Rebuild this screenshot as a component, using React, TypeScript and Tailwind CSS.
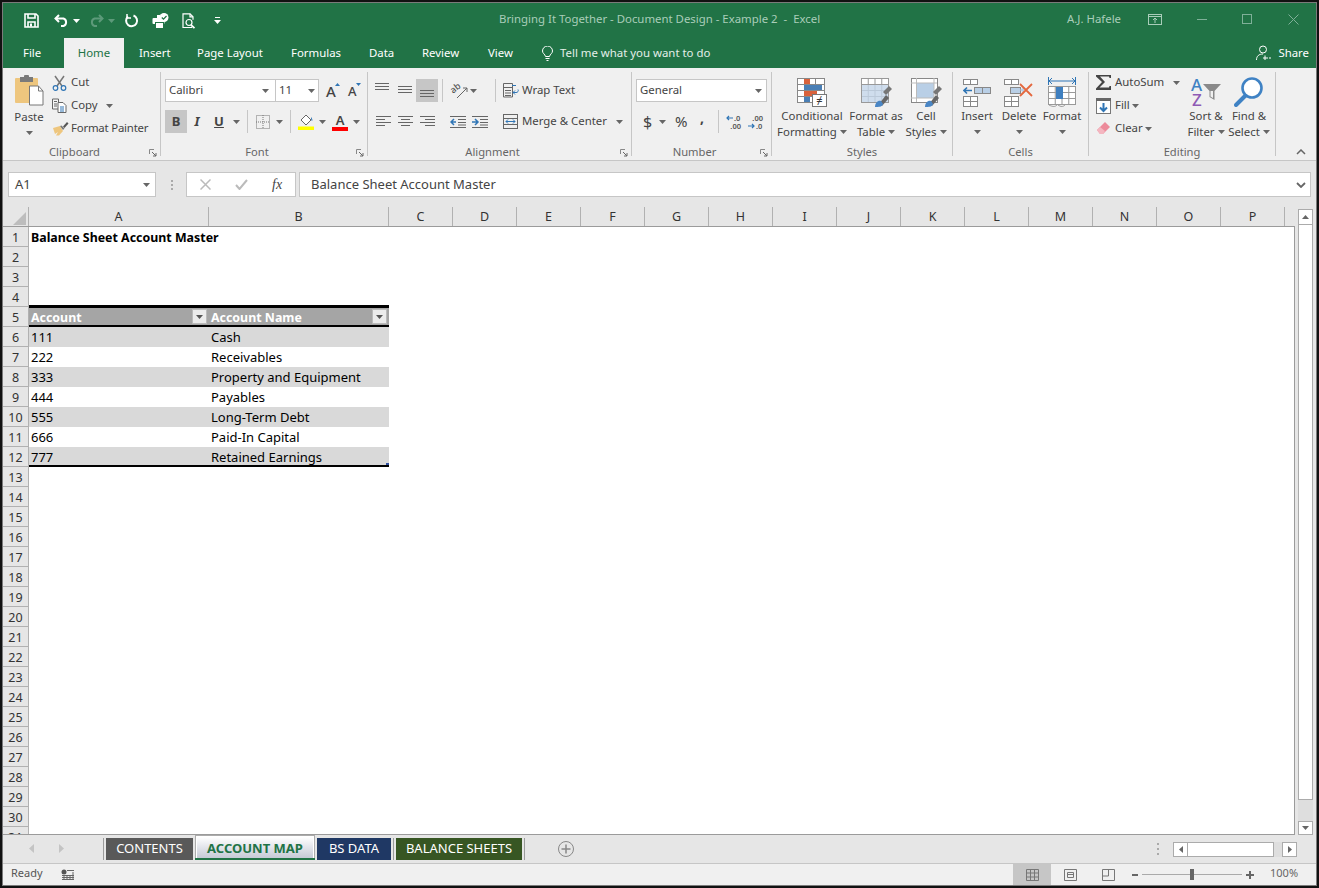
import React from 'react'

const uiFont = { fontFamily: '"Noto Sans", "Open Sans", sans-serif' }

const Caret = ({ className = '', color = '#666' }: { className?: string; color?: string }) => (
  <svg width="7" height="4" viewBox="0 0 7 4" className={className}>
    <path d="M0 0h7L3.500 4z" fill={color} />
  </svg>
)

const Launcher = () => (
  <svg width="8" height="8" viewBox="0 0 8 8" className="absolute right-[3px] top-[5px]">
    <path d="M0.500 5V0.500H5" fill="none" stroke="#888" />
    <path d="M3 3l4 4M7 4v3H4" fill="none" stroke="#666" />
  </svg>
)

const Sep = ({ h = 84 }: { h?: number }) => (
  <div className={h === 84 ? 'w-px h-[84px] mt-[4px] bg-[#c6c6c6] shrink-0' : 'w-px h-[23px] bg-[#c6c6c6] shrink-0'} />
)

const Lbl = ({ children }: { children: React.ReactNode }) => <span className="pb-[2px]">{children}</span>

function Group({ width, label, launcher = true, children }: { width: string; label: string; launcher?: boolean; children: React.ReactNode }) {
  return (
    <div className={`flex flex-col h-[92px] shrink-0 ${width}`}>
      <div className="h-[76px] flex">{children}</div>
      <div className={`relative h-[16px] text-center text-[11.2px] leading-[16px] text-[#666] ${launcher ? 'pr-[14px]' : ''}`}>
        {label}
        {launcher && <Launcher />}
      </div>
    </div>
  )
}

function BigButton({ width, lines, caretInline, icon }: { width: string; lines: string[]; caretInline?: boolean; icon: React.ReactNode }) {
  return (
    <div className={`flex flex-col items-center shrink-0 pt-[8px] text-[11.4px] leading-[16px] text-[#444] ${width}`}>
      <div className="h-[32px] w-[32px] flex items-center justify-center">{icon}</div>
      <div className="whitespace-nowrap">{lines[0]}</div>
      {lines[1] ? (
        <div className="whitespace-nowrap flex items-center gap-[3px]">
          {lines[1]}
          {caretInline && <Caret />}
        </div>
      ) : (
        <div className="h-[16px] flex items-center"><Caret /></div>
      )}
    </div>
  )
}

/* quick access icons */
const SaveIcon = () => (
  <svg width="15" height="15" viewBox="0 0 15 15" fill="none" stroke="#fff" strokeWidth="1.600">
    <path d="M1 1h11l2 2v11H1z" />
    <path d="M4 1v4h7V1M4 14V9h7v5" />
    <rect x="6" y="10.500" width="2" height="3" fill="#fff" stroke="none" />
  </svg>
)
const UndoIcon = ({ faded }: { faded?: boolean }) => (
  <svg width="15" height="13" viewBox="0 0 15 13" fill="none" stroke={faded ? '#5d9a7a' : '#fff'} strokeWidth="2" className={faded ? '-scale-x-100' : ''}>
    <path d="M5 1L1.500 4.500 5 8" />
    <path d="M2 4.500h7.500a4 4 0 0 1 0 7.500H7" />
  </svg>
)
const RepeatIcon = () => (
  <svg width="15" height="15" viewBox="0 0 15 15" fill="none" stroke="#fff" strokeWidth="2">
    <path d="M9.500 2.500a5.500 5.500 0 1 1-5.500 1" />
    <path d="M3 1v4h4" strokeWidth="1.500" />
  </svg>
)
const PrintCheckIcon = () => (
  <svg width="17" height="16" viewBox="0 0 17 16">
    <rect x="0.500" y="5" width="12" height="6" rx="1" fill="#fff" />
    <rect x="3.500" y="9.500" width="8" height="6" fill="#fff" stroke="#217346" />
    <path d="M5 2h3v3H5z" fill="#fff" />
    <circle cx="12" cy="4.500" r="4.500" fill="#fff" />
    <path d="M9.800 4.500l1.700 1.700L14.500 3" fill="none" stroke="#217346" strokeWidth="1.200" />
  </svg>
)
const PreviewIcon = () => (
  <svg width="15" height="16" viewBox="0 0 15 16" fill="none" stroke="#fff" strokeWidth="1.200">
    <path d="M10 14.500H1V.8h7l3 3v3" />
    <path d="M8 .8v3h3" />
    <circle cx="7" cy="9.500" r="3" />
    <path d="M9 12l3.500 3.200" strokeWidth="1.800" />
  </svg>
)

/* ribbon icons */
const PasteIcon = () => (
  <svg width="30" height="32" viewBox="0 0 30 32">
    <rect x="1" y="3" width="23" height="25" rx="1" fill="#eec67e" />
    <rect x="6" y="2" width="13" height="5" fill="#7a7a7a" />
    <rect x="10" y="0" width="5" height="4" rx="1" fill="#7a7a7a" />
    <path d="M15.500 11h9l4.500 5v14H15.500z" fill="#fff" stroke="#777" />
    <path d="M24.500 11v5H29" fill="none" stroke="#777" />
  </svg>
)
const ScissorsIcon = () => (
  <svg width="15" height="16" viewBox="0 0 15 16" fill="none">
    <path d="M3 1l7 10M12 1L5 11" stroke="#777" strokeWidth="1.500" />
    <circle cx="3.500" cy="13" r="2.300" stroke="#2f75b5" strokeWidth="1.200" />
    <circle cx="11.500" cy="13" r="2.300" stroke="#2f75b5" strokeWidth="1.200" />
  </svg>
)
const CopyIcon = () => (
  <svg width="15" height="15" viewBox="0 0 15 15" fill="none" stroke="#666">
    <path d="M.5 1h6v10h-6z" fill="#f5f5f5" />
    <path d="M6 4.500h5l3 3v7H6z" fill="#fff" />
    <path d="M2 3.500h3M2 6h3M2 8h3" />
    <path d="M8 9h4M8 11h4M8 13h4" stroke="#2f75b5" />
  </svg>
)
const BrushIcon = () => (
  <svg width="17" height="15" viewBox="0 0 17 15">
    <path d="M1 7l7-2 3 5-4 4.500H4L6 11l-3 2z" fill="#eec67e" />
    <path d="M8 5l3 4 1.500-1.500-3-3z" fill="#777" />
    <path d="M11 5.500L15 1l1.500 1.500L12.500 7z" fill="#555" />
  </svg>
)
const BordersIcon = () => (
  <svg width="14" height="14" viewBox="0 0 14 14" fill="none" stroke="#777" strokeDasharray="1 1">
    <rect x="0.500" y="0.500" width="13" height="13" />
    <path d="M7 0v14M0 7h14" />
  </svg>
)
const FillIcon = () => (
  <svg width="16" height="16" viewBox="0 0 16 16">
    <path d="M3 6l5-5 5 5-5 5z" fill="#fff" stroke="#666" />
    <path d="M13 3c1 1.500 2 3 1 4-1-1-1-2.500-1-4z" fill="#2f75b5" />
    <rect x="0" y="12.500" width="16" height="3.500" fill="#ffff00" />
  </svg>
)
const AlignLines = ({ d }: { d: string }) => (
  <svg width="15" height="13" viewBox="0 0 15 13" stroke="#666"><path d={d} /></svg>
)
const VAlign = () => (
  <svg width="14" height="9" viewBox="0 0 14 9" stroke="#666">
    <path d="M0 .5h14M0 3.500h14M0 6.500h14" />
  </svg>
)
const OrientIcon = () => (
  <div className="relative w-[18px] h-[16px]">
    <span className="absolute left-[0px] top-[-1px] text-[9px] leading-[12px] text-[#555] font-medium -rotate-[38deg]">ab</span>
    <svg width="18" height="16" viewBox="0 0 18 16" fill="none" className="absolute left-0 top-0">
      <path d="M7 15L17 5M17 5h-4M17 5v4" stroke="#666" />
    </svg>
  </div>
)
const IndentIcon = ({ flip }: { flip?: boolean }) => (
  <svg width="16" height="12" viewBox="0 0 16 12">
    {flip ? (
      <path d="M0 6h5M3 3l3 3-3 3" stroke="#2f75b5" strokeWidth="1.500" fill="none" />
    ) : (
      <path d="M6 6H1M4 3L1 6l3 3" stroke="#2f75b5" strokeWidth="1.500" fill="none" />
    )}
    <path d="M8 3.500h8M8 6.500h8M8 9h8M0 .5h16M0 11.500h16" stroke="#666" />
  </svg>
)
const WrapIcon = () => (
  <svg width="16" height="15" viewBox="0 0 16 15" fill="none">
    <path d="M.5 .5h9v13.500h-9zM.5 4.500h9" stroke="#666" />
    <path d="M2 7.500h6M2 10h6M2 12.500h6" stroke="#666" />
    <path d="M9 2.500h4M10 9.500h3a2 2 0 0 0 2-3M12 7.500l-2 2 2 2" stroke="#2f75b5" />
  </svg>
)
const MergeIcon = () => (
  <svg width="15" height="15" viewBox="0 0 15 15" fill="none" stroke="#666">
    <rect x="0.500" y="0.500" width="14" height="14" />
    <path d="M0 4.500h15M0 10.500h15" />
    <path d="M3 7.500h9M5 5.500l-2 2 2 2M10 5.500l2 2-2 2" stroke="#2f75b5" />
  </svg>
)
const IncDecIcon = ({ dec }: { dec?: boolean }) => (
  <div className="relative w-[15px] h-[16px] text-[7.5px] leading-[8px] text-[#555] font-semibold">
    <div className={dec ? 'text-right' : 'pl-[8px]'}>{dec ? '.00' : '.0'}</div>
    <div className={dec ? 'pl-[8px]' : 'text-right'}>{dec ? '.0' : '.00'}</div>
    <svg width="7" height="6" viewBox="0 0 7 6" className={dec ? 'absolute left-0 bottom-[1px]' : 'absolute left-0 top-[1px]'} fill="none" stroke="#2f75b5" strokeWidth="1.200">
      {dec ? <path d="M0 3h6M4 1l2 2-2 2" /> : <path d="M7 3H1M3 1L1 3l2 2" />}
    </svg>
  </div>
)

const GridCells = ({ x, y, w, h, cols, rows, stroke = '#888' }: { x: number; y: number; w: number; h: number; cols: number; rows: number; stroke?: string }) => (
  <g stroke={stroke} fill="none">
    <rect x={x + 0.5} y={y + 0.5} width={w} height={h} fill="#fff" />
    {Array.from({ length: cols - 1 }).map((_, i) => (
      <path key={i} d={`M${x + 0.5 + ((i + 1) * w) / cols} ${y}v${h}`} />
    ))}
    {Array.from({ length: rows - 1 }).map((_, i) => (
      <path key={i} d={`M${x} ${y + 0.5 + ((i + 1) * h) / rows}h${w}`} />
    ))}
  </g>
)

const CondIcon = () => (
  <svg width="31" height="31" viewBox="0 0 31 31">
    <GridCells x={0} y={1} w={27} h={24} cols={3} rows={4} />
    <rect x="7" y="2" width="6" height="5" fill="#d9623b" />
    <rect x="7" y="8" width="18" height="5" fill="#4a7fb5" />
    <rect x="7" y="14" width="13" height="5" fill="#d9623b" />
    <rect x="7" y="20" width="6" height="5" fill="#4a7fb5" />
    <rect x="15.500" y="17.500" width="14" height="12" fill="#fff" stroke="#777" />
    <text x="22.500" y="27" fontSize="11" textAnchor="middle" fill="#333" fontFamily="Noto Sans">≠</text>
  </svg>
)
const BrushOver = () => (
  <g>
    <path d="M18 27l7-9 3 3-7 8z" fill="#666" />
    <path d="M22 15l6-6 3 3-6 6z" fill="#777" />
    <path d="M14 30c0-4 3-7 6-6l2 3c-1 3-4 3-8 3z" fill="#4a86c5" />
  </g>
)
const FormatTableIcon = () => (
  <svg width="31" height="31" viewBox="0 0 31 31">
    <GridCells x={0} y={1} w={27} h={24} cols={4} rows={4} stroke="#999" />
    <rect x="1" y="8" width="26" height="17" fill="#c3d4e8" opacity="0.800" />
    <BrushOver />
  </svg>
)
const CellStylesIcon = () => (
  <svg width="31" height="31" viewBox="0 0 31 31">
    <rect x="0.500" y="1.500" width="26" height="24" fill="#fff" stroke="#888" />
    <rect x="5" y="6" width="18" height="15" fill="#b9cfe6" />
    <path d="M5.500 1v24M0 6h26M23 1v24M0 21h26" stroke="#bbb" />
    <BrushOver />
  </svg>
)
const InsertIcon = () => (
  <svg width="28" height="30" viewBox="0 0 28 30">
    <GridCells x={0} y={2} w={14} h={5} cols={2} rows={1} />
    <GridCells x={0} y={19} w={14} h={10} cols={2} rows={2} />
    <rect x="11.500" y="10.500" width="16" height="6" fill="#b9cfe6" stroke="#888" />
    <path d="M19.500 10v6" stroke="#888" />
    <path d="M9 13.500H1M4 10.500l-3 3 3 3" fill="none" stroke="#2f75b5" strokeWidth="1.600" />
  </svg>
)
const DeleteIcon = () => (
  <svg width="30" height="30" viewBox="0 0 30 30">
    <GridCells x={0} y={2} w={14} h={5} cols={2} rows={1} />
    <GridCells x={0} y={19} w={14} h={10} cols={2} rows={2} />
    <rect x="6.500" y="10.500" width="10" height="6" fill="#b9cfe6" stroke="#888" />
    <path d="M16 13l4-3v6z" fill="#b9cfe6" />
    <path d="M16 7l12 12M28 7L16 19" stroke="#e4683e" strokeWidth="1.800" />
  </svg>
)
const FormatIcon = () => (
  <svg width="29" height="32" viewBox="0 0 29 32">
    <path d="M1 5h26M4 2L1 5l3 3M24 2l3 3-3 3M.5 1v8M27.500 1v8" fill="none" stroke="#2f75b5" />
    <GridCells x={0} y={10} w={27} h={18} cols={4} rows={3} stroke="#999" />
    <rect x="8" y="11" width="7" height="12" fill="#3f7fbf" />
    <path d="M1 29c4 2 6 2 8 0M10 29c3 2 5 2 7 0" fill="none" stroke="#999" />
  </svg>
)
const SortIcon = () => (
  <div className="relative w-[30px] h-[30px]">
    <div className="absolute left-0 top-0 h-[15px] text-[17px] leading-[15px] font-medium text-[#3f82c4]">A</div>
    <div className="absolute left-[1px] top-[15px] h-[15px] text-[17px] leading-[15px] font-medium text-[#8e5bb5]">Z</div>
    <svg width="18" height="16" viewBox="0 0 18 16" className="absolute right-0 top-[7px]">
      <path d="M0 0h18l-6.500 7v9l-5-3V7z" fill="#8a8a8a" />
      <path d="M7.500 7v5.500l2.500 1.500V7z" fill="#f0f0f0" />
    </svg>
  </div>
)
const FindIcon = () => (
  <svg width="30" height="30" viewBox="0 0 30 30" fill="none">
    <circle cx="18" cy="11" r="9.500" stroke="#3f82c4" strokeWidth="2.600" fill="#fff" />
    <path d="M11 19L2 28" stroke="#3f82c4" strokeWidth="4" strokeLinecap="round" />
  </svg>
)
const SigmaIcon = () => (
  <svg width="16" height="15" viewBox="0 0 16 15"><path d="M0 0h15v3h-1.500l-.5-1.500H4L9 7 3.500 12.500H13l.5-1.500H15v4H0v-1.500L6 7 0 1.500z" fill="#444" /></svg>
)
const FillDownIcon = () => (
  <svg width="15" height="16" viewBox="0 0 15 16">
    <rect x="0.500" y="0.500" width="14" height="15" fill="#fff" stroke="#777" />
    <rect x="0" y="0" width="15" height="3" fill="#666" />
    <path d="M7.500 5v8M4 9.500l3.500 3.500L11 9.500" fill="none" stroke="#2f75b5" strokeWidth="2" />
  </svg>
)
const EraserIcon = () => (
  <svg width="14" height="13" viewBox="0 0 14 13">
    <path d="M9 0l5 5-7 7-3 0-3-4z" fill="#ec8a9a" />
    <path d="M1 8l3-3 5 4-2 3H4z" fill="#f4b6c0" />
  </svg>
)

const columns = [
  { n: 'A', w: 'w-[180px]' }, { n: 'B', w: 'w-[180px]' }, { n: 'C', w: 'w-[64px]' }, { n: 'D', w: 'w-[64px]' },
  { n: 'E', w: 'w-[64px]' }, { n: 'F', w: 'w-[64px]' }, { n: 'G', w: 'w-[64px]' }, { n: 'H', w: 'w-[64px]' },
  { n: 'I', w: 'w-[64px]' }, { n: 'J', w: 'w-[64px]' }, { n: 'K', w: 'w-[64px]' }, { n: 'L', w: 'w-[64px]' },
  { n: 'M', w: 'w-[64px]' }, { n: 'N', w: 'w-[64px]' }, { n: 'O', w: 'w-[64px]' }, { n: 'P', w: 'w-[64px]' }
]

const accounts: Record<number, [string, string]> = {
  6: ['111', 'Cash'],
  7: ['222', 'Receivables'],
  8: ['333', 'Property and Equipment'],
  9: ['444', 'Payables'],
  10: ['555', 'Long-Term Debt'],
  11: ['666', 'Paid-In Capital'],
  12: ['777', 'Retained Earnings']
}

const FilterButton = () => (
  <div className="w-[15px] h-[15px] mr-[2px] bg-[#ececec] border border-[#bbb] flex items-center justify-center shrink-0">
    <Caret color="#555" />
  </div>
)

function Row({ n }: { n: number }) {
  let body: React.ReactNode = null
  if (n === 1) {
    body = <div className="pl-[2px] pt-[1px] font-bold text-[12.4px] text-black whitespace-nowrap">Balance Sheet Account Master</div>
  } else if (n === 4) {
    body = <div className="w-[360px] h-[20px] border-b-[2px] border-black" />
  } else if (n === 5) {
    body = (
      <div className="w-[360px] h-[20px] flex border-t border-b-[2px] border-black bg-[#a5a5a5] font-bold text-[12.4px] text-white">
        {['Account', 'Account Name'].map((t) => (
          <div key={t} className="w-[180px] h-[17px] flex items-center justify-between pl-[2px]">
            <span className="pt-[2px]">{t}</span>
            <FilterButton />
          </div>
        ))}
      </div>
    )
  } else if (accounts[n]) {
    const stripe = n % 2 === 0
    const last = n === 12
    body = (
      <div className={`relative w-[360px] h-[20px] flex items-start text-black ${stripe ? 'bg-[#d9d9d9]' : 'bg-white'} ${last ? 'border-b-[2px] border-black' : ''}`}>
        <div className="w-[180px] pl-[2px]">{accounts[n][0]}</div>
        <div className="w-[180px] pl-[2px]">{accounts[n][1]}</div>
        {last && <div className="absolute right-0 bottom-0 w-[3px] h-[2px] bg-[#2f4f9f]" />}
      </div>
    )
  }
  return (
    <div className="flex h-[20px] shrink-0 text-[13px] leading-[20px]">
      <div className="w-[26px] h-[20px] pt-[1px] bg-[#e6e6e6] border-b border-r border-[#b1b1b1] text-center text-[#333] text-[12.5px] leading-[19px] shrink-0">{n}</div>
      {body}
    </div>
  )
}

export default function App() {
  const rows = Array.from({ length: 31 }, (_, i) => i + 1)
  return (
    <div className="w-[1319px] h-[888px] bg-[#111] pt-[2px] pl-[2px] overflow-hidden" style={uiFont}>
      <div className="w-[1315px] h-[884px] border border-[#7a7a7a] flex flex-col overflow-hidden">
        {/* Title bar */}
        <div className="h-[35px] bg-[#217346] flex items-center shrink-0 text-[11.4px]">
          <div className="ml-[21px] flex items-center w-[16px]"><SaveIcon /></div>
          <div className="ml-[14px]"><UndoIcon /></div>
          <Caret className="ml-[4px]" color="#fff" />
          <div className="ml-[9px]"><UndoIcon faded /></div>
          <Caret className="ml-[4px]" color="#5d9a7a" />
          <div className="ml-[9px]"><RepeatIcon /></div>
          <div className="ml-[13px]"><PrintCheckIcon /></div>
          <div className="ml-[13px]"><PreviewIcon /></div>
          <div className="ml-[17px] flex flex-col items-center gap-[2px] w-[7px]">
            <div className="w-[5px] h-px bg-white" />
            <Caret color="#fff" />
          </div>
          <div className="ml-[278px] w-[330px] pb-[3px] whitespace-pre text-[#a9cdb9]">Bringing It Together - Document Design - Example 2  -  Excel</div>
          <div className="ml-[238px] w-[60px] pb-[3px] whitespace-nowrap text-[#a9cdb9]">A.J. Hafele</div>
          <div className="flex items-center pb-[3px]">
            <svg width="14" height="11" viewBox="0 0 14 11" className="ml-[21px]" fill="none" stroke="#a9cdb9">
              <rect x="0.500" y="0.500" width="13" height="10" />
              <path d="M0 2.500h14M7 9V4M5 6l2-2 2 2" />
            </svg>
            <div className="ml-[35px] w-[10px] h-px bg-[#7fb098]" />
            <div className="ml-[35px] w-[10px] h-[10px] border border-[#7fb098]" />
            <svg width="11" height="11" viewBox="0 0 11 11" className="ml-[36px]" stroke="#7fb098"><path d="M.5 .5l10 10M10.500 .5l-10 10" /></svg>
          </div>
        </div>

        {/* Menu tabs */}
        <div className="h-[30px] bg-[#217346] flex items-stretch shrink-0 text-[11.4px] text-white leading-[30px] relative">
          <div className="ml-[20px] w-[18px] text-center">File</div>
          <div className="ml-[23px] w-[60px] bg-[#f0f0f0] text-[#217346] text-center">Home</div>
          <div className="ml-[15px] w-[29px] text-center">Insert</div>
          <div className="ml-[29px] w-[65px] text-center whitespace-nowrap">Page Layout</div>
          <div className="ml-[29px] w-[49px] text-center">Formulas</div>
          <div className="ml-[29px] w-[24px] text-center">Data</div>
          <div className="ml-[29px] w-[37px] text-center">Review</div>
          <div className="ml-[29px] w-[25px] text-center">View</div>
          <div className="ml-[29px] flex items-center shrink-0">
            <svg width="11" height="15" viewBox="0 0 11 15" fill="none" stroke="#fff">
              <path d="M3.500 10.500C3 8 .5 7.500 .5 5a5 5 0 0 1 10 0c0 2.500-2.500 3-3 5.500zM3.500 12.500h4M4.500 14.500h2" />
            </svg>
            <span className="ml-[7px] w-[151px] whitespace-nowrap text-[#e4efe9]">Tell me what you want to do</span>
          </div>
          <div className="ml-auto mr-[7px] flex items-center">
            <svg width="16" height="16" viewBox="0 0 16 16" fill="none" stroke="#fff" className="mr-[1px]">
              <circle cx="7" cy="4.500" r="3.500" />
              <path d="M.5 15c0-4 2.500-6 6.500-6M9 10.500V15M12 13H7M13 13h2" />
            </svg>
            <span className="ml-[5px]">Share</span>
          </div>
        </div>

        {/* Ribbon */}
        <div className="h-[92px] bg-[#f0f0f0] flex shrink-0 relative">
          <Group width="w-[157px]" label="Clipboard">
            <div className="w-[48px] pl-[4px] pt-[7px] flex flex-col items-center text-[11.4px] leading-[16px] text-[#444]">
              <PasteIcon />
              <div className="mt-[2px]">Paste</div>
              <div className="h-[16px] flex items-center"><Caret /></div>
            </div>
            <div className="pt-[3px] ml-[1px] flex flex-col text-[11.4px] text-[#444]">
              <div className="h-[23px] flex items-center"><div className="w-[19px]"><ScissorsIcon /></div><Lbl>Cut</Lbl></div>
              <div className="h-[23px] flex items-center"><div className="w-[19px]"><CopyIcon /></div><Lbl>Copy</Lbl><Caret className="ml-[8px]" /></div>
              <div className="h-[23px] flex items-center whitespace-nowrap tracking-[-0.2px]"><div className="w-[19px]"><BrushIcon /></div><Lbl>Format Painter</Lbl></div>
            </div>
          </Group>
          <Sep />

          <Group width="w-[206px]" label="Font">
            <div className="pl-[4px] pt-[11px] flex flex-col text-[11.4px] text-[#444]">
              <div className="flex items-center h-[23px]">
                <div className="w-[111px] h-[23px] bg-white border border-[#c6c6c6] flex items-center justify-between px-[3px] pr-[6px]"><Lbl>Calibri</Lbl><Caret /></div>
                <div className="w-[43px] h-[23px] bg-white border border-l-0 border-[#c6c6c6] flex items-center justify-between pl-[3px] pr-[3px] mr-[7px]"><Lbl>11</Lbl><Caret /></div>
                <div className="relative w-[22px] text-[15px] leading-[20px] font-medium">A<svg width="5" height="3" viewBox="0 0 5 3" className="absolute left-[9px] top-[2px]"><path d="M0 3h5L2.500 0z" fill="#2f75b5" /></svg></div>
                <div className="relative w-[20px] text-[13px] leading-[20px] font-medium">A<svg width="5" height="3" viewBox="0 0 5 3" className="absolute left-[8px] top-[2px]"><path d="M0 0h5L2.500 3z" fill="#2f75b5" /></svg></div>
              </div>
              <div className="flex items-center h-[23px] mt-[8px]">
                <div className="w-[22px] h-[23px] bg-[#c6c6c6] flex items-center justify-center font-bold text-[13px]">B</div>
                <div className="w-[20px] text-center italic font-bold text-[13px]">I</div>
                <div className="w-[24px] text-center underline font-bold text-[13px]">U</div>
                <Caret className="ml-[2px]" />
                <div className="ml-[7px]"><Sep h={23} /></div>
                <div className="ml-[8px]"><BordersIcon /></div>
                <Caret className="ml-[6px]" />
                <div className="ml-[7px]"><Sep h={23} /></div>
                <div className="ml-[7px]"><FillIcon /></div>
                <Caret className="ml-[5px]" />
                <div className="ml-[6px] w-[16px] flex flex-col items-center text-[13px] leading-[14px] font-semibold">A<div className="w-[16px] h-[4px] bg-[#ff0000]" /></div>
                <Caret className="ml-[5px]" />
              </div>
            </div>
          </Group>
          <Sep />

          <Group width="w-[263px]" label="Alignment">
            <div className="pl-[7px] pt-[11px] w-[74px] flex flex-col">
              <div className="flex items-center h-[23px]">
                <div className="w-[23px] h-[23px] pb-[6px] flex items-center"><VAlign /></div>
                <div className="w-[18px] h-[23px] flex items-center"><VAlign /></div>
                <div className="w-[22px] h-[23px] pl-[4px] pt-[8px] flex items-center bg-[#c6c6c6]"><VAlign /></div>
              </div>
              <div className="flex items-center h-[23px] mt-[8px] gap-[7px] pl-[1px]">
                <AlignLines d="M0 1.500h15M0 4.500h9M0 7.500h15M0 10.500h9" />
                <AlignLines d="M0 1.500h15M3 4.500h9M0 7.500h15M3 10.500h9" />
                <AlignLines d="M0 1.500h15M5 4.500h10M0 7.500h15M5 10.500h10" />
              </div>
            </div>
            <div className="pt-[11px]"><Sep h={23} /></div>
            <div className="pt-[11px] pl-[7px] w-[52px] flex flex-col">
              <div className="h-[23px] flex items-center"><OrientIcon /><Caret className="ml-[2px]" /></div>
              <div className="h-[23px] mt-[8px] flex items-center gap-[6px]"><IndentIcon /><IndentIcon flip /></div>
            </div>
            <div className="pt-[11px]"><Sep h={23} /></div>
            <div className="pt-[11px] pl-[7px] flex flex-col text-[11.4px] text-[#444]">
              <div className="h-[23px] flex items-center whitespace-nowrap"><div className="w-[19px]"><WrapIcon /></div><Lbl>Wrap Text</Lbl></div>
              <div className="h-[23px] mt-[8px] flex items-center whitespace-nowrap"><div className="w-[19px]"><MergeIcon /></div><Lbl>Merge &amp; Center</Lbl><Caret className="ml-[9px]" /></div>
            </div>
          </Group>
          <Sep />

          <Group width="w-[139px]" label="Number">
            <div className="pl-[4px] pt-[11px] flex flex-col text-[#444]">
              <div className="w-[131px] h-[23px] bg-white border border-[#c6c6c6] flex items-center justify-between px-[3px] pr-[4px] text-[11.4px]"><Lbl>General</Lbl><Caret /></div>
              <div className="h-[23px] mt-[8px] flex items-center">
                <span className="ml-[7px] w-[10px] text-[16px]">$</span>
                <Caret className="ml-[6px]" />
                <span className="ml-[9px] w-[16px] text-[15px]">%</span>
                <span className="ml-[9px] w-[7px] text-[14px] font-bold leading-[14px] pb-[8px]">,</span>
                <div className="ml-[11px]"><Sep h={23} /></div>
                <div className="ml-[7px]"><IncDecIcon /></div>
                <div className="ml-[7px]"><IncDecIcon dec /></div>
              </div>
            </div>
          </Group>
          <Sep />

          <Group width="w-[180px]" label="Styles" launcher={false}>
            <BigButton width="w-[80px]" lines={['Conditional', 'Formatting']} caretInline icon={<CondIcon />} />
            <BigButton width="w-[48px]" lines={['Format as', 'Table']} caretInline icon={<FormatTableIcon />} />
            <BigButton width="w-[52px]" lines={['Cell', 'Styles']} caretInline icon={<CellStylesIcon />} />
          </Group>
          <Sep />

          <Group width="w-[135px]" label="Cells" launcher={false}>
            <div className="w-[4px]" />
            <BigButton width="w-[40px]" lines={['Insert']} icon={<InsertIcon />} />
            <BigButton width="w-[44px]" lines={['Delete']} icon={<DeleteIcon />} />
            <BigButton width="w-[42px]" lines={['Format']} icon={<FormatIcon />} />
          </Group>
          <Sep />

          <Group width="w-[186px]" label="Editing" launcher={false}>
            <div className="pt-[3px] pl-[7px] w-[93px] flex flex-col text-[11.4px] text-[#444] shrink-0">
              <div className="h-[23px] flex items-center whitespace-nowrap"><div className="w-[19px]"><SigmaIcon /></div><Lbl>AutoSum</Lbl><Caret className="ml-[9px]" /></div>
              <div className="h-[23px] flex items-center"><div className="w-[19px]"><FillDownIcon /></div><Lbl>Fill</Lbl><Caret className="ml-[2px]" /></div>
              <div className="h-[23px] flex items-center"><div className="w-[19px]"><EraserIcon /></div><Lbl>Clear</Lbl><Caret className="ml-[2px]" /></div>
            </div>
            <BigButton width="w-[48px]" lines={['Sort &', 'Filter']} caretInline icon={<SortIcon />} />
            <BigButton width="w-[38px]" lines={['Find &', 'Select']} caretInline icon={<FindIcon />} />
          </Group>
          <Sep />
          <svg width="10" height="6" viewBox="0 0 10 6" fill="none" stroke="#666" strokeWidth="1.500" className="absolute right-[10px] bottom-[5px]"><path d="M1 5l4-4 4 4" /></svg>
        </div>

        {/* Formula bar */}
        <div className="h-[47px] bg-[#e6e6e6] border-t border-[#c6c6c6] flex shrink-0 pt-[11px] text-[13px] text-[#444]">
          <div className="ml-[5px] w-[148px] h-[25px] bg-white border border-[#c6c6c6] flex items-center justify-between pl-[6px] pr-[5px]">A1<Caret /></div>
          <div className="ml-[14px] w-[3px] h-[25px] flex flex-col justify-center gap-[2px] items-center">
            <div className="w-[2px] h-[2px] bg-[#aaa]" /><div className="w-[2px] h-[2px] bg-[#aaa]" /><div className="w-[2px] h-[2px] bg-[#aaa]" />
          </div>
          <div className="ml-[13px] w-[110px] h-[25px] bg-white border border-[#c6c6c6] flex items-center">
            <svg width="11" height="11" viewBox="0 0 11 11" stroke="#bbb" strokeWidth="1.500" className="ml-[13px]"><path d="M.5 .5l10 10M10.500 .5l-10 10" /></svg>
            <svg width="13" height="11" viewBox="0 0 13 11" stroke="#bbb" strokeWidth="2" fill="none" className="ml-[24px]"><path d="M1 6l3.500 4L12 1" /></svg>
            <span className="ml-[24px] italic text-[14px] text-[#444]" style={{ fontFamily: '"Liberation Serif", serif' }}>fx</span>
          </div>
          <div className="ml-[3px] w-[1012px] h-[25px] bg-white border border-[#c6c6c6] flex items-center justify-between pl-[11px] pr-[4px]">
            Balance Sheet Account Master
            <svg width="10" height="6" viewBox="0 0 10 6" fill="none" stroke="#666" strokeWidth="1.800"><path d="M1 1l4 4 4-4" /></svg>
          </div>
        </div>

        {/* Sheet */}
        <div className="flex h-[628px] shrink-0 bg-[#e6e6e6]">
          <div className="w-[1292px] flex flex-col shrink-0">
            <div className="relative h-[20px] flex shrink-0 border-b border-[#9b9b9b] text-[12.5px] text-[#333] leading-[19px]">
              <div className="w-[26px] border-r border-[#b1b1b1] shrink-0 flex items-end justify-end pr-[2px] pb-[1px]">
                <svg width="13" height="13" viewBox="0 0 13 13"><path d="M13 0v13H0z" fill="#bdbdbd" /></svg>
              </div>
              {columns.map((c) => (
                <div key={c.n} className={`${c.w} text-center border-r border-[#b1b1b1] shrink-0`}>{c.n}</div>
              ))}
            </div>
            <div className="h-[608px] overflow-hidden bg-white border-r border-b border-[#9b9b9b]">
              {rows.map((n) => <Row key={n} n={n} />)}
            </div>
          </div>
          <div className="w-[21px] pl-[3px] pt-[2px] flex flex-col shrink-0">
            <div className="w-[15px] h-[16px] bg-white border border-[#ababab] flex items-center justify-center shrink-0 rotate-180"><Caret /></div>
            <div className="w-[15px] h-[575px] bg-white border-x border-b border-[#ababab] shrink-0" />
            <div className="w-[15px] h-[21px] bg-[#dedede] shrink-0" />
            <div className="w-[15px] h-[14px] bg-white border border-[#ababab] flex items-center justify-center shrink-0"><Caret /></div>
          </div>
        </div>

        {/* Sheet tabs */}
        <div className="h-[28px] bg-[#e6e6e6] flex items-start shrink-0 text-[13px]">
          <svg width="5" height="9" viewBox="0 0 5 9" className="ml-[26px] mt-[9px]"><path d="M5 0v9L0 4.500z" fill="#c4c4c4" /></svg>
          <svg width="5" height="9" viewBox="0 0 5 9" className="ml-[25px] mt-[9px]"><path d="M0 0v9l5-4.500z" fill="#c4c4c4" /></svg>
          <div className="ml-[39px] mt-[3px] w-px h-[22px] bg-[#9b9b9b]" />
          <div className="ml-[2px] mt-[3px] w-[87px] h-[22px] bg-[#595959] text-white text-center leading-[21px]">CONTENTS</div>
          <div className="ml-[2px] w-[120px] h-[25px] border-t border-x border-[#ababab] bg-white p-[1px] pb-0 relative">
            <div className="h-[21px] bg-gradient-to-b from-[#ffffff] to-[#c6cad6] text-center leading-[23px] font-bold text-[#217346]">ACCOUNT MAP</div>
            <div className="absolute left-[-1px] right-[-1px] bottom-0 h-[2px] bg-[#217346]" />
          </div>
          <div className="ml-[2px] mt-[3px] w-[74px] h-[22px] bg-[#1f3864] text-white text-center leading-[21px]">BS DATA</div>
          <div className="ml-[2px] mt-[3px] w-px h-[22px] bg-[#9b9b9b]" />
          <div className="ml-[2px] mt-[3px] w-[126px] h-[22px] bg-[#375623] text-white text-center leading-[21px]">BALANCE SHEETS</div>
          <div className="ml-[2px] mt-[3px] w-px h-[22px] bg-[#9b9b9b]" />
          <svg width="16" height="16" viewBox="0 0 16 16" fill="none" stroke="#888" className="ml-[33px] mt-[6px]">
            <circle cx="8" cy="8" r="7.500" />
            <path d="M8 3.500v9M3.500 8h9" strokeWidth="1.500" />
          </svg>
          <div className="ml-[583px] mt-[8px] flex flex-col gap-[3px]">
            <div className="w-[2px] h-[2px] bg-[#aaa]" /><div className="w-[2px] h-[2px] bg-[#aaa]" /><div className="w-[2px] h-[2px] bg-[#aaa]" />
          </div>
          <div className="ml-[14px] mt-[7px] flex h-[15px]">
            <div className="w-[15px] h-[15px] bg-white border border-[#ababab] flex items-center justify-center"><svg width="4" height="7" viewBox="0 0 4 7"><path d="M4 0v7L0 3.500z" fill="#666" /></svg></div>
            <div className="w-[86px] h-[15px] bg-white border-y border-r border-[#ababab]" />
            <div className="w-[8px] h-[15px] bg-[#dedede]" />
            <div className="w-[15px] h-[15px] bg-white border border-[#ababab] flex items-center justify-center"><svg width="4" height="7" viewBox="0 0 4 7"><path d="M0 0v7l4-3.500z" fill="#666" /></svg></div>
          </div>
        </div>

        {/* Status bar */}
        <div className="h-[22px] bg-[#f0f0f0] border-t border-[#c6c6c6] flex items-center shrink-0 text-[11px] text-[#555]">
          <span className="ml-[8px] w-[34px] pb-[2px]">Ready</span>
          <svg width="13" height="12" viewBox="0 0 13 12" className="ml-[16px]">
            <circle cx="3" cy="3" r="2.500" fill="#555" />
            <path d="M6 1.500h7M1 6.500h12M1 8.500h12M1 10.500h12M3 6v5M6 6v5M9 6v5M12 3v8" stroke="#666" />
          </svg>
          <div className="ml-[939px] w-[38px] h-[21px] bg-[#c6c6c6] flex items-center justify-center">
            <svg width="13" height="12" viewBox="0 0 13 12" fill="none" stroke="#777"><path d="M.5 .5h12v11H.5zM4.500 0v12M8.500 0v12M0 4h13M0 8h13" /></svg>
          </div>
          <div className="w-[38px] flex justify-center">
            <svg width="13" height="12" viewBox="0 0 13 12" fill="none" stroke="#777"><path d="M.5 .5h12v11H.5zM3.500 3.500h6v5h-6zM3.500 5.500h6" /></svg>
          </div>
          <div className="w-[38px] flex justify-center">
            <svg width="13" height="12" viewBox="0 0 13 12" fill="none" stroke="#777"><path d="M.5 .5h12v11H.5zM6.500 0v7M.5 7h6" /></svg>
          </div>
          <div className="ml-[5px] w-[6px] h-[2px] bg-[#666]" />
          <div className="ml-[4px] w-[100px] h-px bg-[#aaa] relative">
            <div className="absolute left-[48px] top-[-5px] w-[4px] h-[11px] bg-[#666]" />
          </div>
          <svg width="8" height="8" viewBox="0 0 8 8" stroke="#666" strokeWidth="2" className="ml-[4px]"><path d="M0 4h8M4 0v8" /></svg>
          <span className="ml-[16px] pb-[2px] text-[#666]">100%</span>
        </div>
      </div>
    </div>
  )
}
